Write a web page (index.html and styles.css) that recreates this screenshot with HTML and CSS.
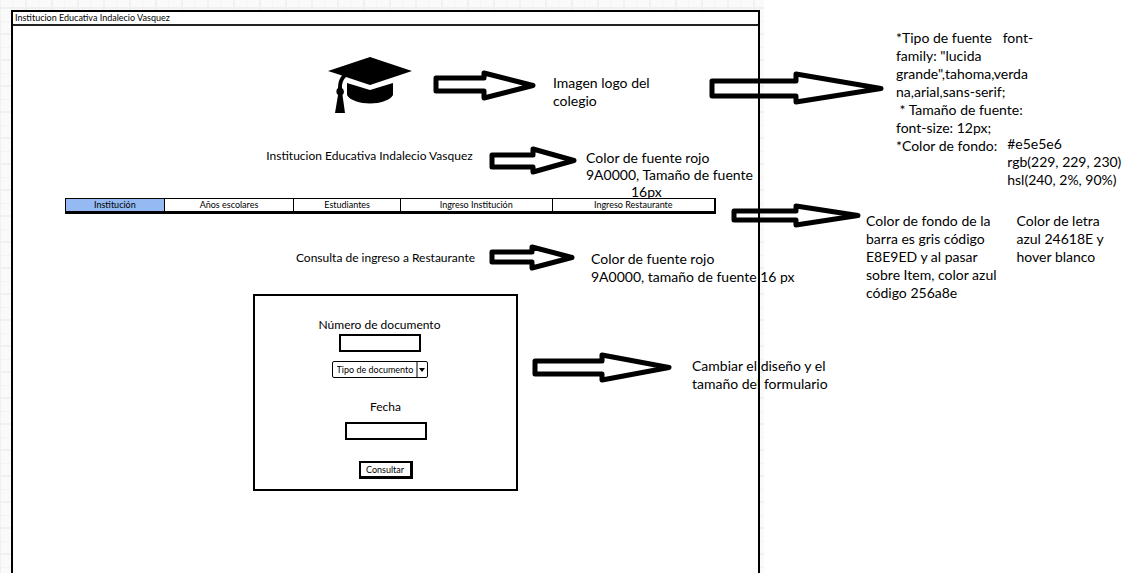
FILE: index.html
```html
<!DOCTYPE html>
<html lang="es">
<head>
<meta charset="utf-8">
<title>Institucion Educativa Indalecio Vasquez</title>
<link rel="stylesheet" href="styles.css">
</head>
<body>
<div class="board">
  <div class="canvas">
    <main class="window">
      <div class="titlebar">Institucion Educativa Indalecio Vasquez</div>
      <header class="brand">
        <svg class="logo" viewBox="0 0 84 56" role="img" aria-label="Logo del colegio">
          <path d="M42 0 84 14 42 28 18 20C14 24 14 28 14 31A4.500 4.500 0 0 1 14.500 38L17 56H7L10 38A4.500 4.500 0 0 1 10 31C10 26 11 22 14 18.500L0 14Z"/>
          <path d="M19 26 42 33 65 26V38C62 43.500 52 46.500 42 46.500S22 43.500 19 38Z"/>
        </svg>
        <h1 class="heading">Institucion Educativa Indalecio Vasquez</h1>
      </header>
      <nav class="menu">
        <a class="item active" href="#">Institución</a>
        <a class="item" href="#">Años escolares</a>
        <a class="item" href="#">Estudiantes</a>
        <a class="item" href="#">Ingreso Institución</a>
        <a class="item" href="#">Ingreso Restaurante</a>
      </nav>
      <h2 class="heading">Consulta de ingreso a Restaurante</h2>
      <form class="query">
        <div class="fields document">
          <label class="label" for="numero">Número de documento</label>
          <input class="field" id="numero" type="text">
          <div class="picker">
            <select class="select" aria-label="Tipo de documento"><option>Tipo de documento</option></select>
            <svg class="caret" viewBox="0 0 11 15"><path d="M1 0V15" stroke="#000"/><path d="M3 6H9L6 10Z"/></svg>
          </div>
        </div>
        <div class="fields date">
          <label class="label" for="fecha">Fecha</label>
          <input class="field" id="fecha" type="text">
          <button class="submit" type="button">Consultar</button>
        </div>
      </form>
    </main>

    <svg class="arrow arrow-logo" viewBox="0 0 103 32"><path d="M3 8H51V3L100 15.500 51 28V21H3Z"/></svg>
    <svg class="arrow arrow-title" viewBox="0 0 89 30"><path d="M3 9H44V3L85 14.500 44 26V21H3Z"/></svg>
    <svg class="arrow arrow-subtitle" viewBox="0 0 87 28"><path d="M3 8H43V3L83 13.500 43 24V18H3Z"/></svg>
    <svg class="arrow arrow-form" viewBox="0 0 141 32"><path d="M3 9H70V3L137 15.500 70 28V22H3Z"/></svg>
    <svg class="arrow arrow-font" viewBox="0 0 176 36"><path d="M3 10H87V3L172 17.500 87 31V25H3Z"/></svg>
    <svg class="arrow arrow-menu" viewBox="0 0 131 26"><path d="M3 8H65V3L127 12.500 65 22V17H3Z"/></svg>

    <p class="note note-logo">Imagen logo del<br>colegio</p>
    <p class="note note-title">Color de fuente rojo<br>9A0000, Tamaño de fuente<br><span class="size">16px</span></p>
    <p class="note note-subtitle">Color de fuente rojo<br>9A0000, tamaño de fuente 16 px</p>
    <p class="note note-form">Cambiar el diseño y el<br>tamaño del formulario</p>
  </div>
  <aside class="notes">
    <div class="group">
      <p class="note">*Tipo de fuente &nbsp; font-<br>family: "lucida<br>grande",tahoma,verda<br>na,arial,sans-serif;<br>&nbsp;* Tamaño de fuente:<br>font-size: 12px;<br>*Color de fondo:</p>
      <p class="note color">#e5e5e6<br>rgb(229, 229, 230)<br>hsl(240, 2%, 90%)</p>
    </div>
    <div class="group bar">
      <p class="note">Color de fondo de la<br>barra es gris código<br>E8E9ED y al pasar<br>sobre Item, color azul<br>código 256a8e</p>
      <p class="note">Color de letra<br>azul 24618E y<br>hover blanco</p>
    </div>
  </aside>
</div>
</body>
</html>
```
FILE: styles.css
```css
* { box-sizing: border-box; }

body {
  margin: 0;
  background: #fff;
  color: #000;
  font-family: Lato, "Open Sans", sans-serif;
}

.board {
  display: grid;
  grid-template-columns: minmax(0, 1fr) 374px;
  min-height: 100vh;
}

.canvas {
  position: relative;
  display: flex;
  padding: 10px 4px 0 11px;
  background:
    linear-gradient(#f0f0f0 2px, transparent 2px) 0 7px / 26px 26px,
    linear-gradient(90deg, #f0f0f0 2px, transparent 2px) 25px 0 / 26px 26px,
    linear-gradient(#f4f4f4 1px, transparent 1px) 0 21px / 26px 26px,
    linear-gradient(90deg, #f4f4f4 1px, transparent 1px) 12px 0 / 26px 26px,
    #fafafa;
}

/* Wireframe window */
.window {
  flex: 1;
  display: flex;
  flex-direction: column;
  border: 2px solid #000;
  border-bottom: 0;
  background: #fff;
}

.titlebar {
  height: 14px;
  padding-left: 2px;
  border-bottom: 2px solid #222;
  font-size: 9px;
  line-height: 12px;
}

.brand {
  display: flex;
  flex-direction: column;
  align-items: center;
  padding: 31px 32px 0 0;
}

.logo { width: 84px; height: 56px; }

.heading {
  margin: 0;
  font-size: 12px;
  font-weight: 400;
  line-height: 16px;
  text-align: center;
}

.brand .heading { margin-top: 35px; }

.menu {
  display: grid;
  grid-template-columns: 98fr 130fr 107fr 152fr 163fr;
  margin: 34px 42px 36px 52px;
  border: 1px solid #000;
  border-width: 1px 2px 3px 1px;
}

.item {
  color: #000;
  font-size: 9px;
  line-height: 12px;
  text-align: center;
  text-decoration: none;
}

.item + .item { border-left: 1px solid #000; }
.item.active { background: #94b9f3; }

.query {
  align-self: center;
  width: 265px;
  margin-top: 28px;
  padding: 20px 0 10px;
  border: 2px solid #000;
}

.fields {
  display: flex;
  flex-direction: column;
  align-items: center;
}

.document { padding-right: 12px; }
.date { margin-top: 20px; }

.label { font-size: 12px; line-height: 18px; }

.field {
  width: 82px;
  height: 18px;
  padding: 0 4px;
  border: 2px solid #000;
  background: #fff;
  font: 9px Lato, sans-serif;
}

.picker {
  position: relative;
  width: 96px;
  height: 17px;
  margin-top: 9px;
}

.select {
  display: block;
  width: 100%;
  height: 100%;
  padding: 0 12px 0 4px;
  border: 1px solid #000;
  border-radius: 2px;
  background: #fff;
  color: #000;
  font: 9px Lato, sans-serif;
  appearance: none;
}

.caret {
  position: absolute;
  top: 1px;
  right: 1px;
  width: 11px;
  height: 15px;
  pointer-events: none;
}

.date .field { margin-top: 6px; }

.submit {
  width: 54px;
  height: 18px;
  margin-top: 21px;
  padding: 0;
  border: 2px solid #000;
  border-width: 2px 3px 3px 2px;
  background: #fff;
  color: #000;
  font: 9px Lato, sans-serif;
}

/* Annotations pinned over the wireframe */
.note {
  margin: 0;
  font-size: 14px;
  line-height: 18px;
  white-space: nowrap;
}

.canvas .note, .arrow { position: absolute; }

.arrow {
  fill: none;
  stroke: #000;
  stroke-width: 5px;
  stroke-linejoin: round;
}

.arrow-logo { left: calc(50% + 51px); top: 70px; width: 103px; }
.arrow-title { left: calc(50% + 107px); top: 146px; width: 89px; }
.arrow-subtitle { left: calc(50% + 107px); top: 244px; width: 87px; }
.arrow-form { left: calc(50% + 150px); top: 352px; width: 141px; }
.arrow-font { left: calc(100% - 55px); top: 71px; width: 176px; }
.arrow-menu { left: calc(100% - 33px); top: 203px; width: 131px; }

.note-logo { left: calc(50% + 171px); top: 74px; }
.note-title { left: calc(50% + 204px); top: 149px; line-height: 17px; }
.note-subtitle { left: calc(50% + 209px); top: 250px; }
.note-form { left: calc(50% + 310px); top: 357px; }
.size { padding-left: 45px; }

.notes { padding: 29px 0 0 102px; }
.group { display: flex; }
.group:first-child { padding-left: 30px; }
.color { align-self: flex-end; margin: 0 0 -34px -26px; }
.bar { gap: 20px; margin-top: 57px; }
```
